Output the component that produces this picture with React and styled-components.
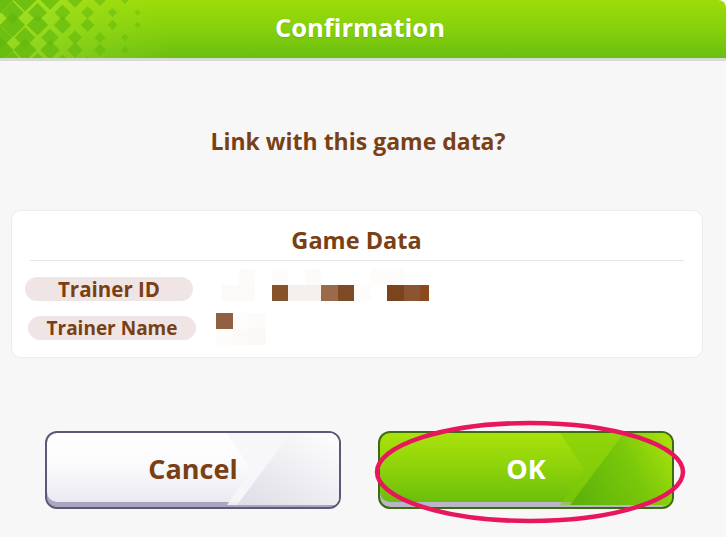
import React from "react";
import styled, { createGlobalStyle } from "styled-components";

const Global = createGlobalStyle`
  html, body { margin: 0; padding: 0; background: #ffffff; }
  body { font-family: "Open Sans", "Lato", sans-serif; }
  * { box-sizing: border-box; }
`;

const Screen = styled.div`
  width: 726px;
  height: 537px;
  background: #f7f7f7;
  display: flex;
  flex-direction: column;
  position: relative;
  overflow: hidden;
`;

const Header = styled.header`
  position: relative;
  height: 61px;
  flex: none;
  background: linear-gradient(180deg, #9ddc08 0%, #86d00c 50%, #6bbf12 100%);
  border-bottom: 3px solid #d9dbd6;
  border-top-right-radius: 8px;
  display: flex;
  align-items: center;
  justify-content: center;
  overflow: hidden;
`;

const HeaderTitle = styled.h1`
  position: relative;
  margin: 0 0 0 -6px;
  padding-bottom: 4px;
  font-family: "Open Sans", sans-serif;
  font-weight: 700;
  font-size: 25.5px;
  color: #ffffff;
  text-shadow: 0 1px 1px rgba(60, 120, 0, 0.25);
`;

const PatternSvg = styled.svg`
  position: absolute;
  left: 0;
  top: 0;
`;

const Body = styled.main`
  flex: 1;
  display: flex;
  flex-direction: column;
  align-items: stretch;
  padding: 0 23px 0 11px;
`;

const Prompt = styled.p`
  margin: 62px 0 0;
  height: 36px;
  line-height: 36px;
  text-align: center;
  font-family: "Open Sans", sans-serif;
  font-weight: 700;
  font-size: 23px;
  color: #7a3f14;
  padding-left: 2px;
`;

const Card = styled.section`
  margin-top: 51px;
  height: 148px;
  background: #ffffff;
  border: 1px solid #ececec;
  border-radius: 10px;
  display: flex;
  flex-direction: column;
  padding: 15px 18px 0 13px;
`;

const CardTitle = styled.h2`
  margin: 0;
  text-align: center;
  font-family: "Open Sans", sans-serif;
  font-weight: 700;
  font-size: 23.5px;
  color: #7a3f14;
  height: 28px;
  line-height: 28px;
  padding-left: 4px;
`;

const Divider = styled.hr`
  margin: 6px 0 0 5px;
  border: 0;
  border-top: 1.5px solid #e4e4e4;
`;

const Row = styled.div`
  display: flex;
  align-items: flex-start;
  height: 24px;
  margin-top: ${(p) => p.$top}px;
`;

const Pill = styled.span`
  width: 168px;
  height: 24px;
  margin-left: ${(p) => p.$indent || 0}px;
  border-radius: 12px;
  background: #efe5e5;
  display: flex;
  align-items: center;
  justify-content: center;
  font-family: "Open Sans", sans-serif;
  font-weight: 700;
  font-size: ${(p) => p.$size || 19.5}px;
  line-height: 24px;
  color: #7a3f14;
  flex: none;
`;

const Mosaic = styled.div`
  display: flex;
  flex-direction: column;
  margin-left: ${(p) => p.$left}px;
  margin-top: ${(p) => p.$top}px;
`;

const MosaicLine = styled.div`
  display: flex;
`;

const Cell = styled.span`
  width: ${(p) => p.$w || 16.5}px;
  height: 16px;
  background: ${(p) => p.$c};
  flex: none;
`;

const Buttons = styled.div`
  margin-top: 73px;
  display: flex;
  gap: 37px;
  padding-left: 34px;
  position: relative;
`;

const GameButton = styled.button`
  position: relative;
  width: 296px;
  height: 78px;
  padding: 0 0 5px;
  border: 2px solid ${(p) => (p.$primary ? "#3e6a14" : "#5b5878")};
  border-radius: 12px;
  background: ${(p) =>
    p.$primary
      ? "linear-gradient(180deg, #a9e20a 0%, #8fd30a 45%, #66bb0c 100%)"
      : "linear-gradient(180deg, #ffffff 0%, #fbfbfd 40%, #e9e7f0 100%)"};
  box-shadow: inset 0 -5px 0 ${(p) => (p.$primary ? "#b8b6c8" : "#a9a6bf")};
  overflow: hidden;
  display: flex;
  align-items: center;
  justify-content: center;
  cursor: pointer;
`;

const ButtonDeco = styled.svg`
  position: absolute;
  left: 0;
  top: 0;
`;

const ButtonLabel = styled.span`
  position: relative;
  font-family: "Open Sans", sans-serif;
  font-weight: 700;
  font-size: 27px;
  color: ${(p) => (p.$primary ? "#ffffff" : "#7a3f14")};
  margin-top: 2px;
`;

const Highlight = styled.svg`
  position: absolute;
  left: 363px;
  top: -11px;
  pointer-events: none;
`;

const RightStrip = styled.div`
  position: absolute;
  right: -2px;
  top: 0;
  width: 2px;
  height: 537px;
  background: #ffffff;
`;

function HeaderPattern() {
  const items = [];
  const step = 25;
  for (let i = -1; i < 8; i++) {
    for (let j = -1; j < 4; j++) {
      const cx = i * step + (j % 2 ? step / 2 : 0);
      const cy = j * step;
      const t = Math.max(0, Math.min(1, cx / 150));
      const s = 19 * (1 - t) + 3 * t;
      if (s < 3.5) continue;
      items.push(
        <rect
          key={`${i}-${j}`}
          x={cx - s / 2}
          y={cy - s / 2}
          width={s}
          height={s}
          fill="#62b80e"
          opacity={0.85 - t * 0.4}
          transform={`rotate(45 ${cx} ${cy})`}
        />
      );
    }
  }
  for (let i = -1; i < 8; i++) {
    for (let j = -1; j < 4; j++) {
      const cx = i * step + step / 2 + (j % 2 ? step / 2 : 0);
      const cy = j * step + step / 2;
      const t = Math.max(0, Math.min(1, cx / 150));
      const s = 17 * (1 - t) + 3 * t;
      if (s < 3.5) continue;
      items.push(
        <rect
          key={`b${i}-${j}`}
          x={cx - s / 2}
          y={cy - s / 2}
          width={s}
          height={s}
          fill="#62b80e"
          opacity={0.8 - t * 0.4}
          transform={`rotate(45 ${cx} ${cy})`}
        />
      );
    }
  }
  return (
    <PatternSvg width="170" height="58" viewBox="0 0 170 58">
      <defs>
        <linearGradient id="lite" x1="0" x2="1" y1="0" y2="0">
          <stop offset="0" stopColor="#a4e02a" stopOpacity="0.75" />
          <stop offset="0.6" stopColor="#a4e02a" stopOpacity="0.25" />
          <stop offset="1" stopColor="#a4e02a" stopOpacity="0" />
        </linearGradient>
      </defs>
      <rect x="0" y="0" width="170" height="58" fill="url(#lite)" />
      {items}
    </PatternSvg>
  );
}

function CancelDeco() {
  return (
    <ButtonDeco width="296" height="78" viewBox="0 0 296 78">
      <defs>
        <linearGradient id="cg" x1="0" x2="1" y1="1" y2="0">
          <stop offset="0" stopColor="#dcdae4" />
          <stop offset="1" stopColor="#ffffff" />
        </linearGradient>
      </defs>
      <path d="M180 0 L204 36 L180 72 L296 72 L296 0 Z" fill="#f6f6f8" opacity="0.9" />
      <path d="M244 0 L296 0 L296 72 L190 72 Z" fill="url(#cg)" opacity="0.9" />
    </ButtonDeco>
  );
}

function OkDeco() {
  return (
    <ButtonDeco width="296" height="78" viewBox="0 0 296 78">
      <defs>
        <linearGradient id="og" x1="0" x2="1" y1="0.7" y2="0.3">
          <stop offset="0" stopColor="#5db30a" />
          <stop offset="0.6" stopColor="#7cc90a" />
          <stop offset="1" stopColor="#a5e00c" />
        </linearGradient>
      </defs>
      <path d="M180 0 L204 36 L180 72 L296 72 L296 0 Z" fill="#7fca0a" opacity="0.55" />
      <path d="M244 0 L296 0 L296 72 L190 72 Z" fill="url(#og)" />
    </ButtonDeco>
  );
}

const row1Top = [
  ["#ffffff", 16.5], ["#fdfbf9", 16.5], ["#ffffff", 16.5], ["#fefcfa", 16.5],
  ["#ffffff", 16.5], ["#fdfbf9", 16.5], ["#ffffff", 16.5], ["#ffffff", 16.5],
  ["#ffffff", 16.5], ["#fefcfb", 16.5], ["#fefcfb", 16.5], ["#ffffff", 16.5],
  ["#ffffff", 9],
];
const row1 = [
  ["#fcf9f6", 16.5], ["#fcfaf8", 16.5], ["#ffffff", 16.5], ["#865229", 16.5],
  ["#f5f0eb", 16.5], ["#f5f0eb", 16.5], ["#9a6a4b", 16.5], ["#7e4a24", 16.5],
  ["#fdfcfb", 16.5], ["#ffffff", 16.5], ["#7b431e", 16.5], ["#8a5530", 16.5],
  ["#8b4a1d", 9],
];
const row2 = [["#8f6142", 16.5], ["#fefdfc", 16.5], ["#fdfbfa", 16.5]];
const row2b = [["#fdfcfb", 16.5], ["#fcfaf8", 16.5], ["#fbf8f6", 16.5]];

export default function App() {
  return (
    <>
      <Global />
      <Screen>
        <Header>
          <HeaderPattern />
          <HeaderTitle>Confirmation</HeaderTitle>
        </Header>
        <Body>
          <Prompt>Link with this game data?</Prompt>
          <Card>
            <CardTitle>Game Data</CardTitle>
            <Divider />
            <Row $top={16}>
              <Pill $size={20.5}>Trainer ID</Pill>
              <Mosaic $left={29} $top={-8}>
                <MosaicLine>
                  {row1Top.map(([c, w], k) => (
                    <Cell key={k} $c={c} $w={w} />
                  ))}
                </MosaicLine>
                <MosaicLine>
                  {row1.map(([c, w], k) => (
                    <Cell key={k} $c={c} $w={w} />
                  ))}
                </MosaicLine>
              </Mosaic>
            </Row>
            <Row $top={15}>
              <Pill $indent={3} $size={19}>Trainer Name</Pill>
              <Mosaic $left={20} $top={-3}>
                <MosaicLine>
                  {row2.map(([c, w], k) => (
                    <Cell key={k} $c={c} $w={w} />
                  ))}
                </MosaicLine>
                <MosaicLine>
                  {row2b.map(([c, w], k) => (
                    <Cell key={k} $c={c} $w={w} />
                  ))}
                </MosaicLine>
              </Mosaic>
            </Row>
          </Card>
          <Buttons>
            <GameButton type="button">
              <CancelDeco />
              <ButtonLabel>Cancel</ButtonLabel>
            </GameButton>
            <GameButton type="button" $primary>
              <OkDeco />
              <ButtonLabel $primary>OK</ButtonLabel>
            </GameButton>
            <Highlight width="320" height="104" viewBox="0 0 320 104">
              <ellipse cx="156" cy="52" rx="153" ry="49" fill="none" stroke="#e8175d" strokeWidth="4.5" />
            </Highlight>
          </Buttons>
        </Body>
        <RightStrip />
      </Screen>
    </>
  );
}
